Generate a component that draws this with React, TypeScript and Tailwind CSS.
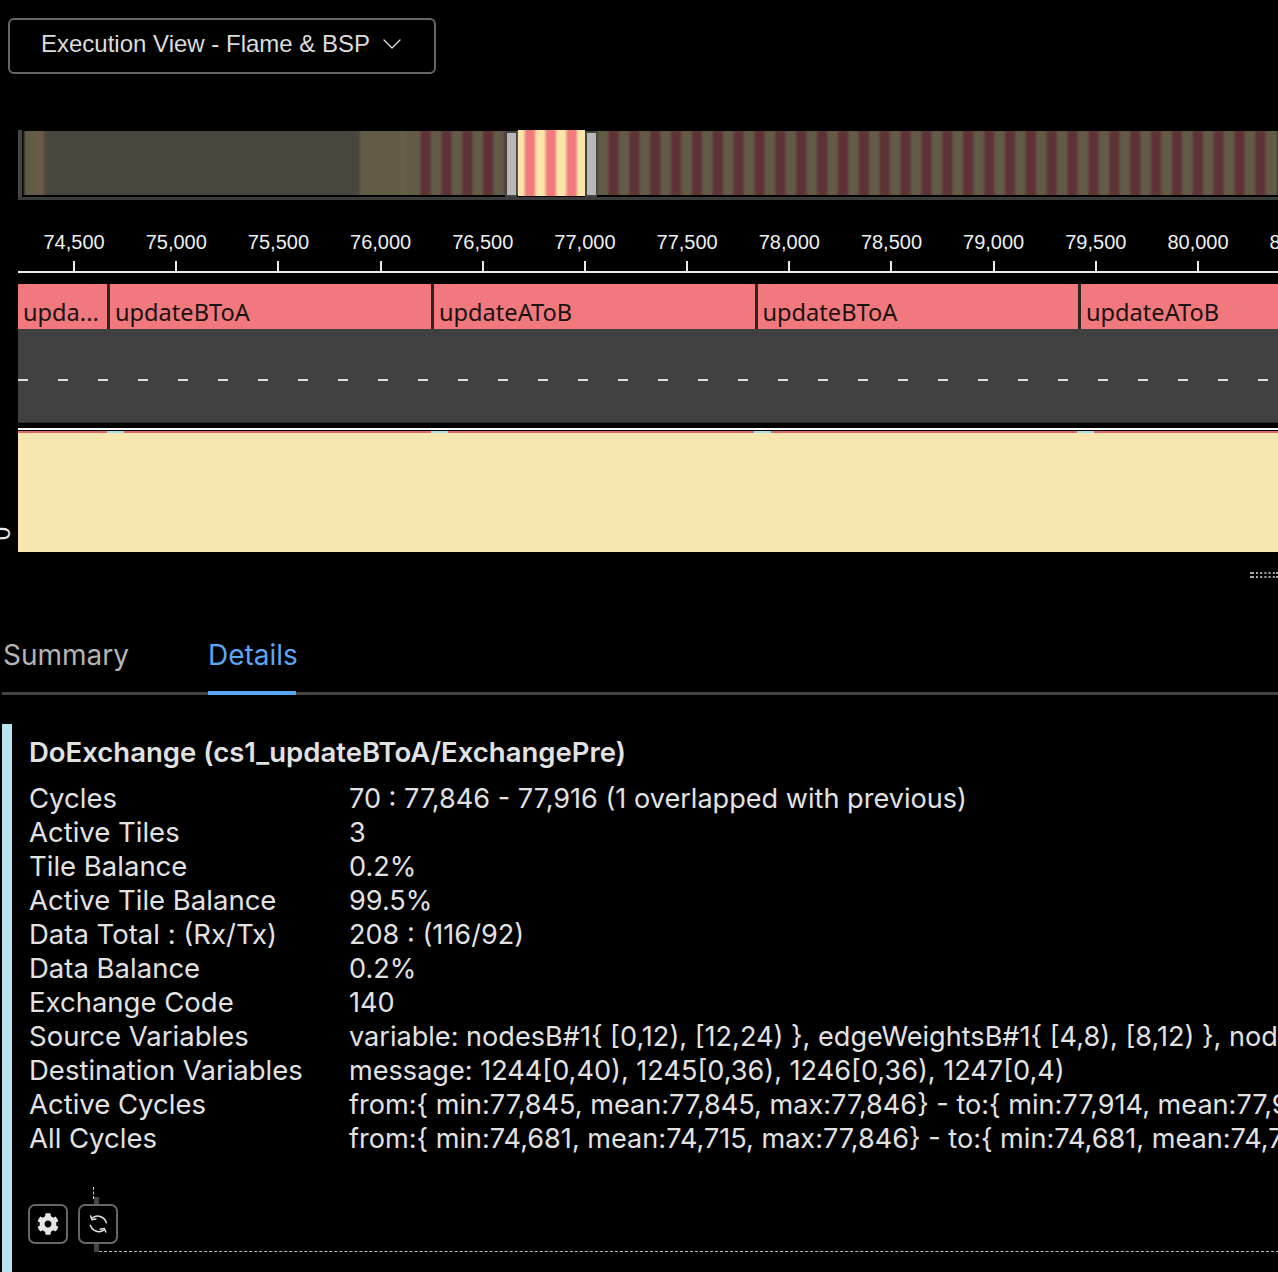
import React from 'react';
import { ChevronDown } from 'lucide-react';
import { FaCog } from 'react-icons/fa';

const ticks = ['74,500', '75,000', '75,500', '76,000', '76,500', '77,000', '77,500', '78,000', '78,500', '79,000', '79,500', '80,000', '80,500'];

const flameBars = [
  { label: 'upda...', width: 'w-[89px]' },
  { label: 'updateBToA', width: 'w-[321px]' },
  { label: 'updateAToB', width: 'w-[320.5px]' },
  { label: 'updateBToA', width: 'w-[320.5px]' },
  { label: 'updateAToB', width: 'w-[321px]' },
];

const details = [
  ['Cycles', '70 : 77,846 - 77,916 (1 overlapped with previous)'],
  ['Active Tiles', '3'],
  ['Tile Balance', '0.2%'],
  ['Active Tile Balance', '99.5%'],
  ['Data Total : (Rx/Tx)', '208 : (116/92)'],
  ['Data Balance', '0.2%'],
  ['Exchange Code', '140'],
  ['Source Variables', 'variable: nodesB#1{ [0,12), [12,24) }, edgeWeightsB#1{ [4,8), [8,12) }, nodesA#1{ [0,12) }'],
  ['Destination Variables', 'message: 1244[0,40), 1245[0,36), 1246[0,36), 1247[0,4)'],
  ['Active Cycles', 'from:{ min:77,845, mean:77,845, max:77,846} - to:{ min:77,914, mean:77,915, max:77,916}'],
  ['All Cycles', 'from:{ min:74,681, mean:74,715, max:77,846} - to:{ min:74,681, mean:74,750, max:77,916}'],
];

const OverviewStrip: React.FC = () => {
  const stripes = Array.from({ length: 41 }, (_, i) => 420.4 + i * 20.87);
  return (
    <svg width="1278" height="70" viewBox="0 130 1278 70" className="block">
      <defs>
        <filter id="soft" x="-2%" y="-2%" width="104%" height="104%">
          <feGaussianBlur stdDeviation="0.8 0" />
        </filter>
      </defs>
      <rect x="18" y="130" width="4" height="70" fill="#444444" />
      <rect x="18" y="197" width="1260" height="3" fill="#3c3c3c" />
      <g filter="url(#soft)">
        <rect x="24" y="131" width="1254" height="64" fill="#625c47" />
        <rect x="35" y="131" width="9" height="64" fill="#6a5a4a" />
        <rect x="44" y="131" width="316" height="64" fill="#4a473e" />
        <rect x="400" y="131" width="5" height="64" fill="#675f4b" />
        {stripes.map((x) => (
          <rect key={x} x={x} y="131" width="10.4" height="64" fill="#5f3339" />
        ))}
      </g>
      <rect x="518" y="130" width="67" height="66" fill="#f9e4aa" />
      <g filter="url(#soft)">
        {[524.7, 545.6, 566.4].map((x) => (
          <rect key={x} x={x} y="130" width="10.4" height="66" fill="#f2797d" />
        ))}
      </g>
      <rect x="505" y="131" width="12" height="66" fill="#444444" />
      <rect x="507" y="133" width="9" height="62" fill="#b8b8b8" />
      <rect x="585" y="131" width="12" height="66" fill="#444444" />
      <rect x="587" y="133" width="9" height="62" fill="#b8b8b8" />
    </svg>
  );
};

const ResizeGrip: React.FC = () => (
  <svg width="28" height="6" className="block">
    {[0, 4].map((y) => (
      <g key={y} fill="#a8a8a8">
        <rect x="0" y={y} width="4" height="2" />
        {[6, 10.2, 14.4, 18.6, 22.8, 26].map((x) => (
          <rect key={x} x={x} y={y} width="2" height="2" />
        ))}
      </g>
    ))}
  </svg>
);

const SyncIcon: React.FC = () => (
  <svg width="36" height="36" viewBox="2 2 36 36" fill="none" stroke="#e0e0e0" strokeWidth="1.5" strokeLinecap="round" strokeLinejoin="round">
    <path d="M28.4 18.8A9 9 0 0 0 14.5 13.8" />
    <path d="M12.6 12L14 15.8L18 15" />
    <path d="M12.4 21.2A9 9 0 0 0 25.8 26.2" />
    <path d="M27.8 28L26.2 24.4L22.2 25.2" />
  </svg>
);

export default function App() {
  return (
    <div className="relative h-[1272px] w-[1278px] overflow-hidden bg-black text-[#e2e2e2] font-['Inter','Noto_Sans',sans-serif]">
      <div className="pl-2 pt-[18px]">
        <button className="flex h-[56px] w-[428px] items-center rounded-[6px] border-2 border-[#666666] pb-[4px] pl-[31px] font-['Liberation_Sans',sans-serif] text-[24px] text-[#dcdcdc]">
          <span>Execution View - Flame &amp; BSP</span>
          <ChevronDown className="ml-[6px] h-[32px] w-[32px]" strokeWidth={1} />
        </button>
      </div>

      <div className="mt-[56px]">
        <OverviewStrip />
      </div>

      <div className="ml-[18px] mt-[20px] h-[53px] overflow-hidden border-b-2 border-[#ededed]">
        <div className="ml-[5px] flex w-[1400px] pt-[11px]">
          {ticks.map((t) => (
            <div key={t} className="flex w-[102.18px] flex-none flex-col items-center font-['Liberation_Sans',sans-serif] text-[20px] leading-[23px] text-[#efefef]">
              <span>{t}</span>
              <span className="mt-[7px] h-[11px] w-[2px] bg-[#ededed]" />
            </div>
          ))}
        </div>
      </div>

      <div className="ml-[18px] mt-[11px] flex h-[45px] gap-[3px] overflow-hidden bg-[#2e2520]">
        {flameBars.map((b, i) => (
          <div key={i} className={`${b.width} flex-none bg-[#f1797d] pl-[5px] font-['Noto_Sans',sans-serif] text-[23.6px] leading-[57px] text-[#1a1212]`}>
            {b.label}
          </div>
        ))}
      </div>

      <div className="ml-[18px] flex h-[94px] items-center border-b border-[#303030] bg-[#404040] pt-[8px]">
        <div className="h-[2px] w-full bg-[repeating-linear-gradient(90deg,#e0e0e0_0,#e0e0e0_10px,transparent_10px,transparent_40px)]" />
      </div>

      <div className="ml-[18px] mt-[5px]">
        <div className="h-[2px] bg-white" />
        <div className="h-[1px] bg-black" />
        <div className="flex h-[2px] bg-[#d86a6a]">
          <div className="w-[89px] flex-none" />
          {[323.5, 323.5, 323].map((w) => (
            <div key={w} className="flex-none" style={{ width: w }}>
              <div className="h-full w-[17px] bg-[#a9dfe8]" />
            </div>
          ))}
          <div className="w-[17px] flex-none bg-[#a9dfe8]" />
        </div>
        <div className="h-[119px] bg-[#f7e6b0]" />
      </div>

      <span className="absolute left-[-5px] top-[520px] -rotate-90 font-['Liberation_Sans',sans-serif] text-[24px] leading-[27px] text-[#e8e8e8]">0</span>

      <div className="mt-[20px] flex justify-end">
        <ResizeGrip />
      </div>

      <div className="ml-[2px] mt-[47px] flex h-[70px] border-b-[3px] border-[#444444] text-[28px]">
        <div className="w-[206px] pl-px pt-[9px] text-[#b4b4b4]">Summary</div>
        <div className="-mb-[3px] h-[70px] w-[88px] border-b-4 border-[#5aa7f5] pt-[9px] text-center text-[#5aa7f5]">Details</div>
      </div>

      <div className="ml-[2px] mt-[29px] flex h-[548px] border-l-[10px] border-[#b9e3ef]">
        <div className="min-w-0 flex-1 pl-[17px] pt-[10px]">
          <h2 className="text-[27.5px] font-semibold leading-[36px] whitespace-nowrap">DoExchange (cs1_updateBToA/ExchangePre)</h2>
          <div className="mt-[11px] overflow-hidden leading-[34px]">
            {details.map(([k, v]) => (
              <div key={k} className="flex h-[34px] items-baseline whitespace-nowrap">
                <div className="w-[320px] flex-none text-[27.5px]">{k}</div>
                <div className="text-[27.1px]">{v}</div>
              </div>
            ))}
          </div>

          <div className="relative -ml-px mt-[32px] flex gap-[10px] pt-[17px]">
            <div className="absolute left-[65px] top-0 h-[12px] border-l border-dashed border-[#cccccc]" />
            <div className="absolute left-[66px] top-[10px] h-[55px] w-[5px] bg-[#444444]" />
            <div className="absolute left-[71px] top-[64px] w-[1200px] border-t border-dashed border-[#bbbbbb]" />
            <button className="relative flex h-[40px] w-[40px] items-center justify-center rounded-[7px] border-2 border-[#666666] bg-black text-[#e6e6e6]">
              <FaCog size={22} />
            </button>
            <button className="relative flex h-[40px] w-[40px] items-center justify-center rounded-[7px] border-2 border-[#666666] bg-black">
              <SyncIcon />
            </button>
          </div>
        </div>
      </div>
    </div>
  );
}
